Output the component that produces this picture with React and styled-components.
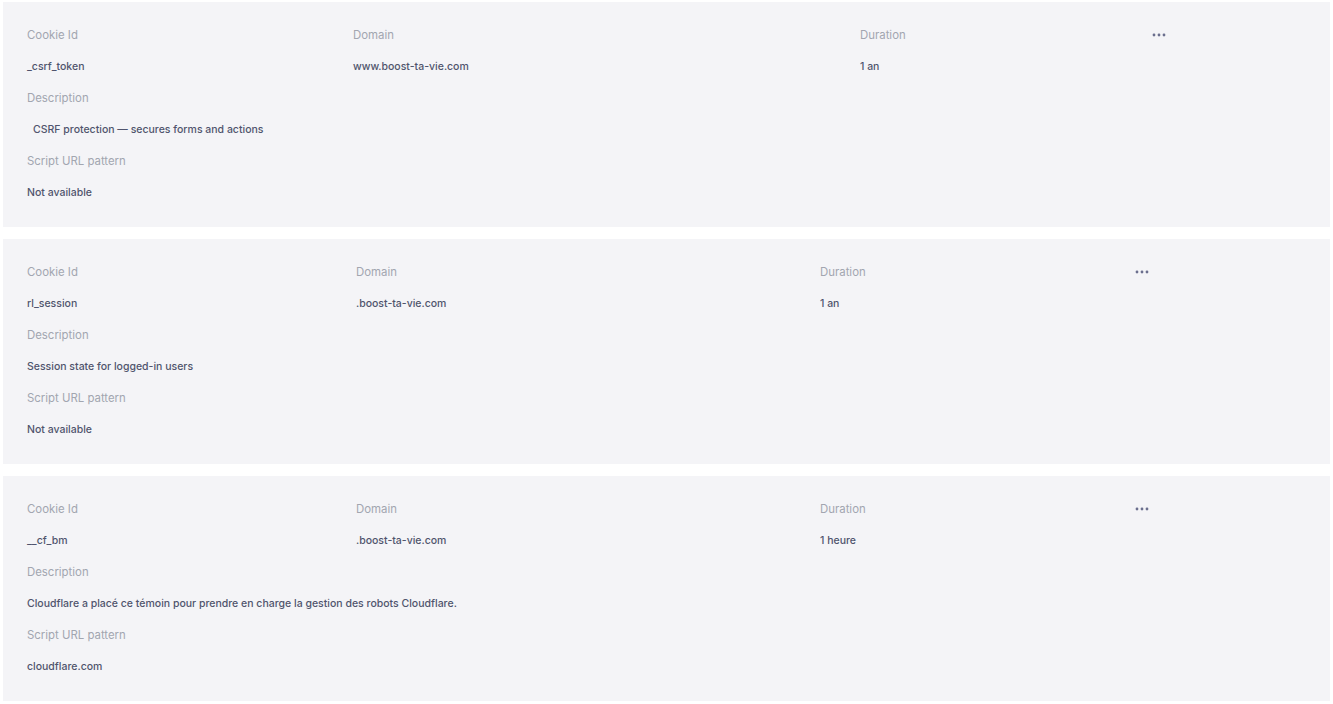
import styled, { createGlobalStyle } from "styled-components";

const GlobalStyle = createGlobalStyle`
  body {
    margin: 0;
    background: #ffffff;
    font-family: Inter, "Noto Sans", "Liberation Sans", sans-serif;
  }
`;

const Page = styled.div`
  display: flex;
  flex-direction: column;
  gap: 12px;
  padding: 2px 3px 0 3px;
`;

const Card = styled.div`
  background: #f4f4f7;
  padding: 25px 24px 26.5px 24px;
  display: flex;
  flex-direction: column;
  gap: 15.5px;
`;

const TopGrid = styled.div`
  display: grid;
  grid-template-columns: ${(p) => p.cols};
  row-gap: 15.5px;
`;

const Label = styled.div`
  font-size: 11.4px;
  line-height: 16px;
  color: #a2a6b0;
  font-weight: 400;
`;

const Value = styled.div`
  font-size: 10.5px;
  line-height: 16px;
  color: #50546d;
  font-weight: 500;
  padding-left: ${(p) => p.indent || 0}px;
`;

const Dots = styled.div`
  height: 16px;
  display: flex;
  align-items: center;
`;

const cookies = [
  {
    id: "_csrf_token",
    domain: "www.boost-ta-vie.com",
    duration: "1 an",
    description: "CSRF protection — secures forms and actions",
    indent: 6,
    script: "Not available",
    cols: "326px 507px 292px 1fr",
  },
  {
    id: "rl_session",
    domain: ".boost-ta-vie.com",
    duration: "1 an",
    description: "Session state for logged-in users",
    script: "Not available",
    cols: "329px 464px 315px 1fr",
  },
  {
    id: "__cf_bm",
    domain: ".boost-ta-vie.com",
    duration: "1 heure",
    description:
      "Cloudflare a placé ce témoin pour prendre en charge la gestion des robots Cloudflare.",
    script: "cloudflare.com",
    cols: "329px 464px 315px 1fr",
  },
];

function MoreIcon() {
  return (
    <svg width="14" height="4" viewBox="0 0 14 4">
      <circle cx="2" cy="2" r="1.4" fill="#6b6f8e" />
      <circle cx="7" cy="2" r="1.4" fill="#6b6f8e" />
      <circle cx="12" cy="2" r="1.4" fill="#6b6f8e" />
    </svg>
  );
}

function CookieCard({ c }) {
  return (
    <Card>
      <TopGrid cols={c.cols}>
        <Label>Cookie Id</Label>
        <Label>Domain</Label>
        <Label>Duration</Label>
        <Dots>
          <MoreIcon />
        </Dots>
        <Value>{c.id}</Value>
        <Value>{c.domain}</Value>
        <Value>{c.duration}</Value>
        <div />
      </TopGrid>
      <Label>Description</Label>
      <Value indent={c.indent}>{c.description}</Value>
      <Label>Script URL pattern</Label>
      <Value>{c.script}</Value>
    </Card>
  );
}

export default function App() {
  return (
    <>
      <GlobalStyle />
      <Page>
        {cookies.map((c) => (
          <CookieCard key={c.id} c={c} />
        ))}
      </Page>
    </>
  );
}
